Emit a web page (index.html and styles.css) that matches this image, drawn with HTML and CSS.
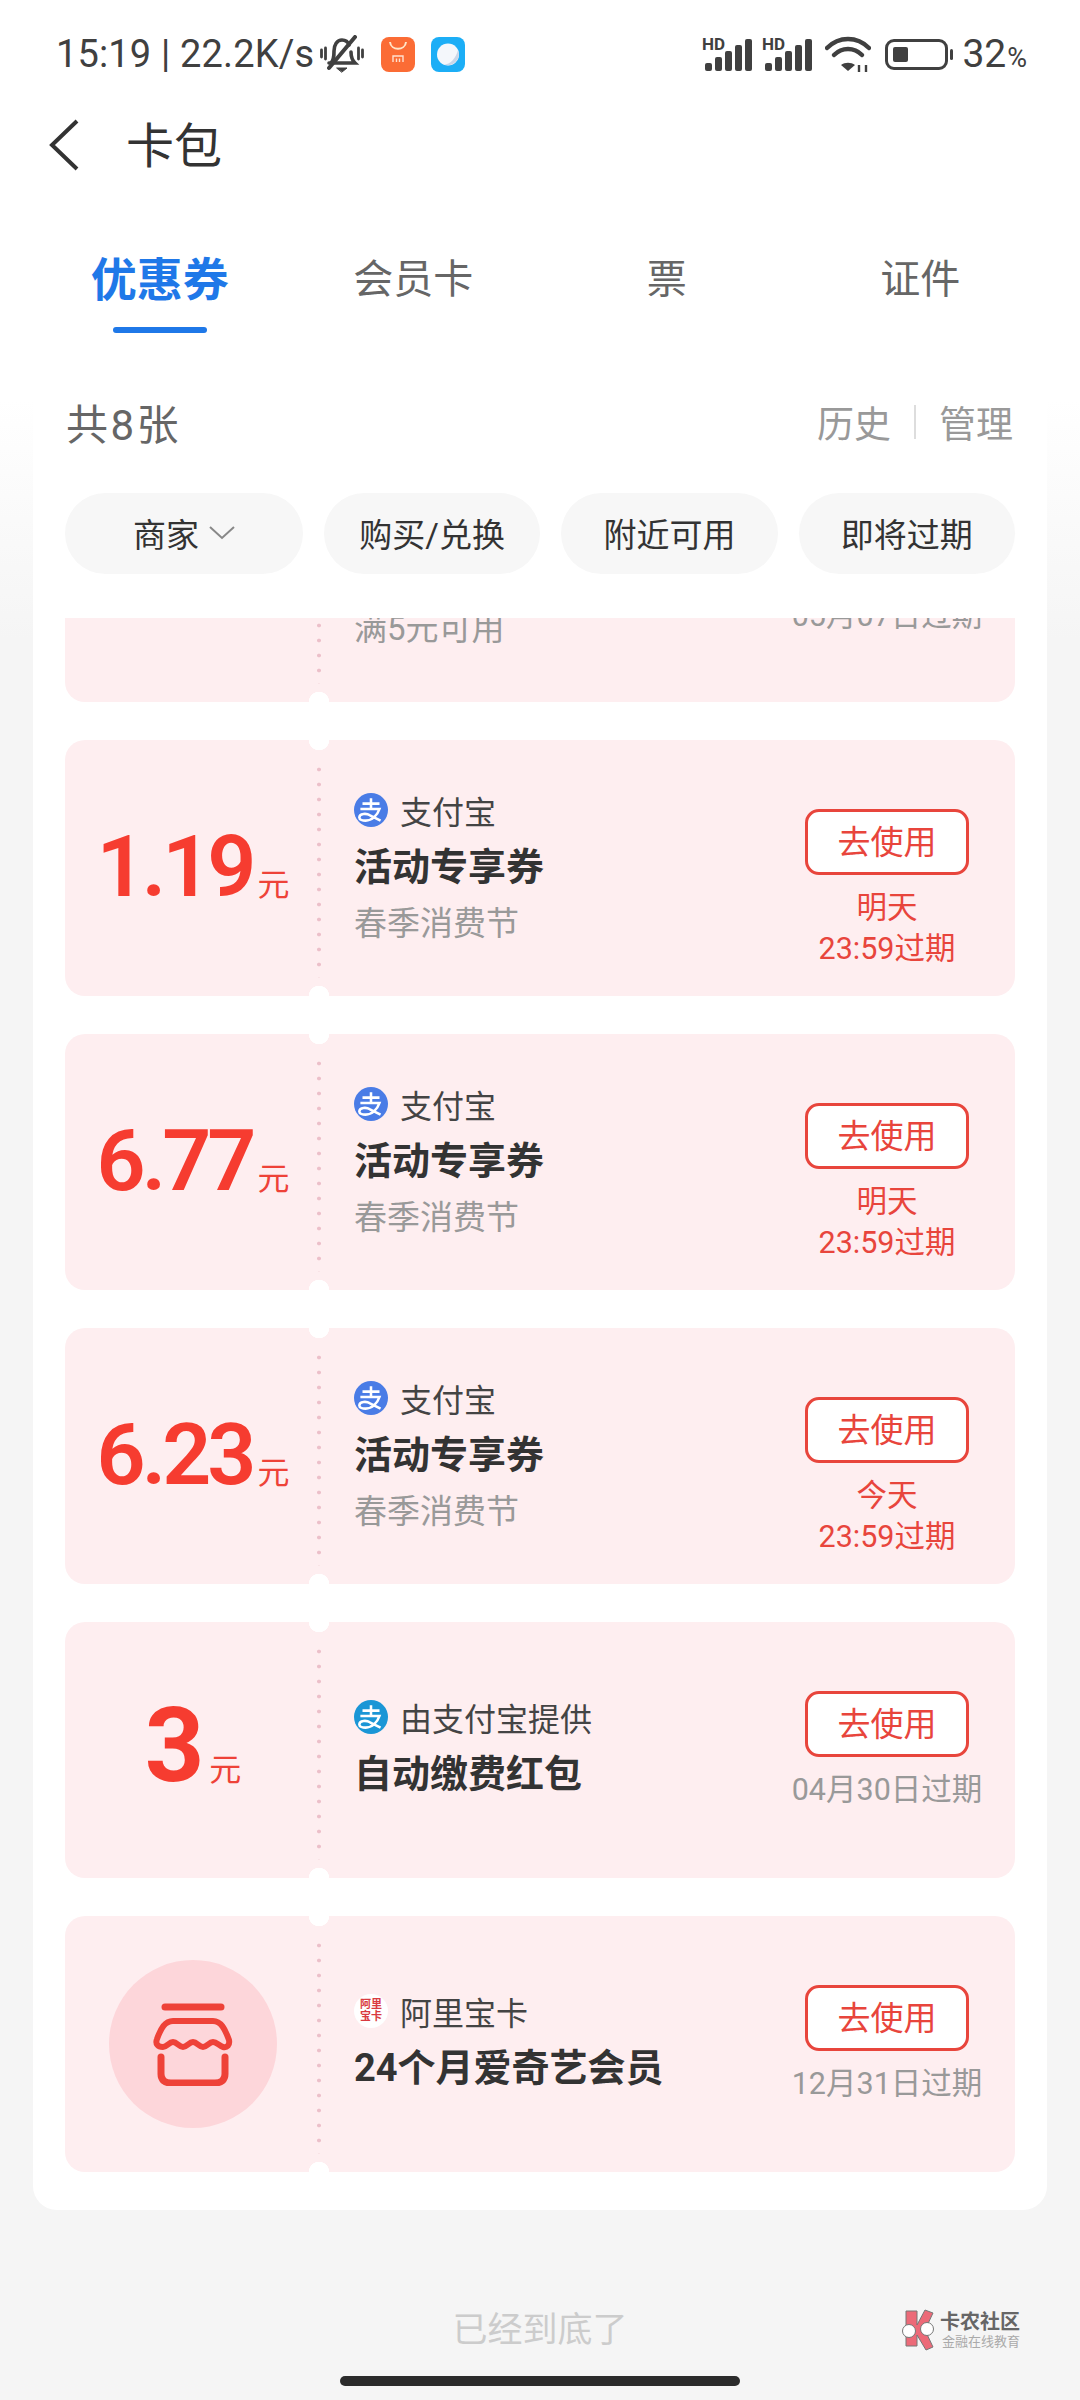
FILE: index.html
```html
<!DOCTYPE html>
<html lang="zh-CN">
<head>
<meta charset="UTF-8" />
<meta name="viewport" content="width=device-width, initial-scale=1.0" />
<title>卡包</title>
<link rel="stylesheet" href="styles.css">
</head>
<body>
<div class="page">
    <!-- status bar -->
    <div class="statusbar">
        <div class="status-left">
            <span class="clock">15:19 | 22.2K/s</span>
            <svg class="bell" width="44" height="38" viewBox="0 0 44 38" fill="none" stroke="#404040" stroke-width="3.6" stroke-linecap="round">
                <path d="M1.500 15v7M5.500 13v11M38.500 13v11M42.500 15v7" stroke-width="2.800"/>
                <path d="M11 28c3-3 3-7 3-12 0-6 3-11 8-11 3 0 6 2 7 5M31 17c0 5 1 8 4 11H9"/>
                <path d="M9 33L35 2" stroke-width="4"/>
                <path d="M17 33h10l-5 4z" fill="#404040" stroke-width="1"/>
            </svg>
            <svg class="app-icon" width="34" height="35" viewBox="0 0 34 35">
                <rect width="34" height="35" rx="8" fill="#fb6c35"/>
                <path d="M9 5c1 9 15 9 16 0" fill="none" stroke="#ffe6c8" stroke-width="2"/>
                <path d="M12 25v-6h10v6M15.500 21.500v3.500M18.500 21.500v3.500" fill="none" stroke="#ffe0d0" stroke-width="1.400"/>
            </svg>
            <svg class="app-icon app-icon-blue" width="34" height="35" viewBox="0 0 34 35">
                <rect width="34" height="35" rx="8" fill="#1caef6"/>
                <circle cx="17" cy="17.500" r="11" fill="#f4f7fb"/>
                <path d="M27 13a11 11 0 0 1-14 14.500c6 0 12-6 14-14.500z" fill="#c9d6e8"/>
            </svg>
        </div>
        <div class="status-right">
            <svg width="50" height="36" viewBox="0 0 50 36" fill="#404040">
                <text x="0" y="14" class="hd">HD</text>
                <rect x="3" y="27" width="7" height="8" rx="2"/>
                <rect x="13" y="21" width="7" height="14" rx="2"/>
                <rect x="23" y="15" width="7" height="20" rx="2"/>
                <rect x="33" y="9" width="7" height="26" rx="2"/>
                <rect x="43" y="3" width="7" height="32" rx="2"/>
            </svg>
            <svg width="50" height="36" viewBox="0 0 50 36" fill="#404040">
                <text x="0" y="14" class="hd">HD</text>
                <rect x="3" y="27" width="7" height="8" rx="2"/>
                <rect x="13" y="21" width="7" height="14" rx="2"/>
                <rect x="23" y="15" width="7" height="20" rx="2"/>
                <rect x="33" y="9" width="7" height="26" rx="2"/>
                <rect x="43" y="3" width="7" height="32" rx="2"/>
            </svg>
            <svg class="wifi" width="46" height="36" viewBox="0 0 46 36" fill="none" stroke="#404040" stroke-width="4.500" stroke-linecap="round">
                <path d="M2 12c12-12 30-12 42 0"/>
                <path d="M9 19c8-8 20-8 28 0"/>
                <path d="M23 35l-7-6c4-3 10-3 14 0z" fill="#404040" stroke="none"/>
                <path d="M34 36v-7M41 36v-7" stroke-width="2.400" stroke-linecap="butt"/>
            </svg>
            <div class="battery"><div class="battery-level"></div></div>
            <div class="battery-nub"></div>
            <span class="percent">32<small>%</small></span>
        </div>
    </div>

    <!-- title -->
    <div class="navbar">
        <svg width="30" height="52" viewBox="0 0 30 52" fill="none" stroke="#333" stroke-width="4">
            <path d="M28 2L3 26l25 24"/>
        </svg>
        <span class="nav-title">卡包</span>
    </div>

    <!-- tabs -->
    <div class="tabs">
        <div class="tab active">优惠券<i></i></div>
        <div class="tab">会员卡</div>
        <div class="tab">票</div>
        <div class="tab">证件</div>
    </div>

    <div class="panel">
        <div class="panel-head">
            <span class="count">共8张</span>
            <div class="links">
                <span>历史</span>
                <i></i>
                <span>管理</span>
            </div>
        </div>

        <div class="chips">
            <div class="chip">商家
                <svg width="26" height="14" viewBox="0 0 26 14" fill="none" stroke="#888" stroke-width="2"><path d="M1 1l12 11L25 1"/></svg>
            </div>
            <div class="chip">购买/兑换</div>
            <div class="chip">附近可用</div>
            <div class="chip">即将过期</div>
        </div>

        <div class="list">
            <!-- scrolled mostly out of view -->
            <div class="ticket ticket-clipped">
                <div class="amount"></div>
                <div class="perf"></div>
                <div class="info">
                    <div class="sub">满5元可用</div>
                </div>
                <div class="action">
                    <div class="expire">05月07日过期</div>
                </div>
            </div>

            <div class="ticket">
                <div class="amount"><b>1.19</b><span>元</span></div>
                <div class="perf"></div>
                <div class="info">
                    <div class="brand">
                        <svg class="brand-icon" viewBox="0 0 32 32"><circle cx="16" cy="16" r="16" fill="#4a7ce6"/><path d="M8 10h16M16 5v9M6 15h18c-2 6-7 11-13 11-3 0-6-1-6-3 0-4 7-4 10-2l10 5" fill="none" stroke="#fff" stroke-width="2.400"/></svg>
                        支付宝
                    </div>
                    <div class="name">活动专享券</div>
                    <div class="sub">春季消费节</div>
                </div>
                <div class="action">
                    <div class="use">去使用</div>
                    <div class="expire soon">明天<br>23:59过期</div>
                </div>
            </div>

            <div class="ticket">
                <div class="amount"><b>6.77</b><span>元</span></div>
                <div class="perf"></div>
                <div class="info">
                    <div class="brand">
                        <svg class="brand-icon" viewBox="0 0 32 32"><circle cx="16" cy="16" r="16" fill="#4a7ce6"/><path d="M8 10h16M16 5v9M6 15h18c-2 6-7 11-13 11-3 0-6-1-6-3 0-4 7-4 10-2l10 5" fill="none" stroke="#fff" stroke-width="2.400"/></svg>
                        支付宝
                    </div>
                    <div class="name">活动专享券</div>
                    <div class="sub">春季消费节</div>
                </div>
                <div class="action">
                    <div class="use">去使用</div>
                    <div class="expire soon">明天<br>23:59过期</div>
                </div>
            </div>

            <div class="ticket">
                <div class="amount"><b>6.23</b><span>元</span></div>
                <div class="perf"></div>
                <div class="info">
                    <div class="brand">
                        <svg class="brand-icon" viewBox="0 0 32 32"><circle cx="16" cy="16" r="16" fill="#4a7ce6"/><path d="M8 10h16M16 5v9M6 15h18c-2 6-7 11-13 11-3 0-6-1-6-3 0-4 7-4 10-2l10 5" fill="none" stroke="#fff" stroke-width="2.400"/></svg>
                        支付宝
                    </div>
                    <div class="name">活动专享券</div>
                    <div class="sub">春季消费节</div>
                </div>
                <div class="action">
                    <div class="use">去使用</div>
                    <div class="expire soon">今天<br>23:59过期</div>
                </div>
            </div>

            <div class="ticket ticket-short">
                <div class="amount big"><b>3</b><span>元</span></div>
                <div class="perf"></div>
                <div class="info">
                    <div class="brand">
                        <svg class="brand-icon" viewBox="0 0 32 32"><circle cx="16" cy="16" r="16" fill="#1b96d6"/><path d="M8 10h16M16 5v9M6 15h18c-2 6-7 11-13 11-3 0-6-1-6-3 0-4 7-4 10-2l10 5" fill="none" stroke="#fff" stroke-width="2.400"/></svg>
                        由支付宝提供
                    </div>
                    <div class="name">自动缴费红包</div>
                </div>
                <div class="action">
                    <div class="use">去使用</div>
                    <div class="expire">04月30日过期</div>
                </div>
            </div>

            <div class="ticket ticket-short">
                <div class="amount amount-icon">
                    <div class="store">
                        <svg width="84" height="84" viewBox="0 0 84 84" fill="none" stroke="#ee4238" stroke-width="7" stroke-linecap="round" stroke-linejoin="round">
                            <path d="M14 5h56"/>
                            <path d="M22 19h40c8 0 12 8 16 19 1 5-2 8-6 7-4-1-6-5-10-5s-6 5-10 5-6-5-10-5-6 5-10 5-6-5-10-5-6 5-10 5c-5 0-8-3-6-8 4-11 8-18 16-18z" stroke-width="6"/>
                            <path d="M10 55v17c0 6 4 9 10 9h44c6 0 10-3 10-9V55"/>
                        </svg>
                    </div>
                </div>
                <div class="perf"></div>
                <div class="info">
                    <div class="brand">
                        <span class="brand-icon ali-card">阿里<br>宝卡</span>
                        阿里宝卡
                    </div>
                    <div class="name">24个月爱奇艺会员</div>
                </div>
                <div class="action">
                    <div class="use">去使用</div>
                    <div class="expire">12月31日过期</div>
                </div>
            </div>
        </div>
    </div>

    <div class="bottom-tip">已经到底了</div>
    <div class="home-bar"></div>

    <!-- watermark of the forum -->
    <div class="watermark">
        <svg width="38" height="42" viewBox="0 0 38 42">
            <path d="M6 2h11v14L25 1l8 3-8 17 8 17-7 3-9-15v11H6z" fill="#ec6a78" stroke="#777" stroke-width="1"/>
            <circle cx="9" cy="22" r="6.500" fill="#fff" stroke="#777"/>
            <circle cx="27" cy="20" r="6.500" fill="#fff" stroke="#777"/>
        </svg>
        <div class="watermark-text">
            <b>卡农社区</b>
            <span>金融在线教育</span>
        </div>
    </div>
</div>
</body>
</html>
```

FILE: styles.css
```css
* {
    box-sizing: border-box;
}

body {
    margin: 0;
    font-family: Roboto, "Noto Sans CJK SC", sans-serif;
    color: #333;
}

.page {
    position: relative;
    width: 1080px;
    height: 2400px;
    overflow: hidden;
    background: linear-gradient(#fff 400px, #f5f5f5 640px);
}

/* status bar */
.statusbar {
    height: 104px;
    padding: 4px 53px 0 56px;
    display: flex;
    align-items: center;
    justify-content: space-between;
    color: #404040;
}

.status-left,
.status-right {
    display: flex;
    align-items: center;
}

.clock {
    font-size: 38px;
    line-height: 1;
    letter-spacing: 0.15px;
    white-space: nowrap;
}

.bell {
    margin-left: 6px;
}

.app-icon {
    margin-left: 17px;
}

.app-icon-blue {
    margin-left: 16px;
}

.hd {
    font-family: Roboto, sans-serif;
    font-size: 17px;
    font-weight: 700;
}

.status-right svg + svg {
    margin-left: 10px;
}

.status-right .wifi {
    margin-left: 13px;
}

.battery {
    width: 63px;
    height: 31px;
    margin-left: 14px;
    padding: 5px;
    border: 3.5px solid #404040;
    border-radius: 9px;
}

.battery-level {
    width: 15px;
    height: 100%;
    background-color: #404040;
    border-radius: 2px;
}

.battery-nub {
    width: 3px;
    height: 11px;
    margin-left: 2px;
    background-color: #404040;
    border-radius: 2px;
}

.percent {
    margin-left: 9px;
    font-size: 39px;
    line-height: 1;
}

.percent small {
    margin-left: 1px;
    font-size: 27px;
}

/* title */
.navbar {
    height: 82px;
    padding-left: 49px;
    display: flex;
    align-items: center;
}

.nav-title {
    margin: 3px 0 0 47px;
    font-size: 48px;
    line-height: 60px;
}

/* tabs */
.tabs {
    height: 194px;
    padding: 64px 33px 0;
    display: grid;
    grid-template-columns: repeat(4, 1fr);
}

.tab {
    height: 60px;
    font-size: 40px;
    line-height: 60px;
    text-align: center;
    color: #666;
}

.tab.active {
    font-size: 46px;
    font-weight: 700;
    color: #1f78e8;
}

.tab i {
    display: block;
    width: 94px;
    height: 6px;
    margin: 17px auto 0;
    background-color: #1f78e8;
    border-radius: 3px;
}

/* white panel */
.panel {
    margin: 0 33px;
    padding: 0 32px 38px;
    background-color: #fff;
    border-radius: 0 0 24px 24px;
}

.panel-head {
    height: 86px;
    padding-bottom: 3px;
    display: flex;
    align-items: center;
    justify-content: space-between;
    color: #666;
}

.count {
    font-size: 42px;
    letter-spacing: 2.5px;
    margin-left: 1px;
}

.links {
    display: flex;
    align-items: center;
    margin-right: 2px;
    font-size: 37px;
    color: #999;
}

.links i {
    width: 2px;
    height: 34px;
    margin: 0 23px;
    background-color: #ddd;
}

.chips {
    margin-top: 27px;
    display: grid;
    grid-template-columns: 238px repeat(3, 1fr);
    gap: 21px;
}

.chip {
    height: 81px;
    padding-bottom: 2px;
    display: flex;
    align-items: center;
    justify-content: center;
    gap: 10px;
    font-size: 33px;
    background-color: #f7f7f7;
    border-radius: 41px;
}

.list {
    height: 1554px;
    margin-top: 44px;
    overflow: hidden;
}

/* ticket */
.ticket {
    height: 256px;
    margin-bottom: 38px;
    display: flex;
    background-color: #feeef0;
    border-radius: 20px;
}

.ticket-clipped {
    margin-top: -172px;
}

.amount {
    width: 244px;
    padding: 71px 0 0 12px;
    display: flex;
    align-items: baseline;
    justify-content: center;
    color: #f63c30;
}

.amount b {
    font-size: 86px;
    font-weight: 600;
    line-height: 112px;
    letter-spacing: -4px;
}

.amount span {
    margin-left: 5px;
    font-size: 32px;
    color: #ee4238;
}

.amount.big {
    padding-top: 68px;
}

.amount.big b {
    font-size: 104px;
    font-weight: 700;
    letter-spacing: 0;
}

.amount-icon {
    padding-top: 44px;
}

.store {
    width: 168px;
    height: 168px;
    display: flex;
    align-items: center;
    justify-content: center;
    background-color: #fdd6da;
    border-radius: 50%;
}

/* notches and dotted tear line */
.perf {
    position: relative;
    flex: none;
    width: 20px;
    background:
        radial-gradient(circle at 10px 0, #fff 10px, transparent 10.5px),
        radial-gradient(circle at 10px 100%, #fff 10px, transparent 10.5px);
}

.perf::after {
    content: "";
    position: absolute;
    top: 22px;
    bottom: 18px;
    left: 8px;
    width: 4px;
    background: radial-gradient(circle, #ecc0ca 1.6px, transparent 2.2px) 0 0 / 4px 15px repeat-y;
}

.info {
    flex: 1;
    min-width: 0;
    padding: 0 0 3px 25px;
    display: flex;
    flex-direction: column;
    justify-content: center;
}

.ticket-clipped .info {
    justify-content: flex-end;
    padding-bottom: 49px;
}

.ticket-short .info {
    padding-bottom: 6px;
}

.brand {
    height: 48px;
    display: flex;
    align-items: center;
    gap: 14px;
    font-size: 32px;
    color: #444;
}

.brand-icon {
    width: 34px;
    height: 34px;
    flex: none;
    margin-right: -2px;
}

.ali-card {
    font-size: 11px;
    line-height: 12px;
    font-weight: 700;
    text-align: center;
    padding-top: 5px;
    color: #d93a40;
    background-color: #fff;
    border-radius: 50%;
}

.name {
    margin-top: 6px;
    font-size: 38px;
    line-height: 54px;
    font-weight: 700;
    color: #333;
}

.sub {
    margin-top: 6px;
    font-size: 33px;
    line-height: 48px;
    color: #999;
}

.action {
    width: 200px;
    flex: none;
    margin-right: 28px;
    padding-top: 69px;
    display: flex;
    flex-direction: column;
    align-items: center;
}

.ticket-clipped .action {
    padding-top: 137px;
}

.use {
    width: 164px;
    height: 66px;
    font-size: 33px;
    line-height: 62px;
    text-align: center;
    color: #e8453c;
    background-color: #fff;
    border: 3px solid #e8453c;
    border-radius: 14px;
}

.expire {
    margin-top: 12px;
    font-size: 30.5px;
    line-height: 41px;
    text-align: center;
    white-space: nowrap;
    color: #999;
}

.expire.soon {
    color: #e8453c;
}

/* bottom */
.bottom-tip {
    margin-top: 96px;
    font-size: 35px;
    line-height: 50px;
    text-align: center;
    color: #ccc;
}

.home-bar {
    width: 400px;
    height: 10px;
    margin: 20px auto 0;
    background-color: #2b2b2b;
    border-radius: 5px;
}

.watermark {
    position: absolute;
    left: 900px;
    top: 2309px;
    display: flex;
    align-items: center;
    gap: 2px;
}

.watermark-text {
    display: flex;
    flex-direction: column;
    align-items: flex-end;
}

.watermark-text b {
    font-size: 20px;
    line-height: 24px;
    color: #666;
}

.watermark-text span {
    font-size: 13px;
    line-height: 16px;
    color: #aaa;
}
```
